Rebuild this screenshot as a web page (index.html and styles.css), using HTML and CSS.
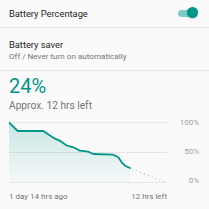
FILE: index.html
```html
<!DOCTYPE html>
<html>
<head>
<meta charset="utf-8">
<link rel="stylesheet" href="styles.css">
</head>
<body>
<div class="row row-toggle">
  <span class="title">Battery Percentage</span>
  <span class="switch"><span class="track"></span><span class="thumb"></span></span>
</div>
<div class="row row-saver">
  <div class="title">Battery saver</div>
  <div class="subtitle">Off / Never turn on automatically</div>
</div>
<div class="battery">
  <div class="level">24%</div>
  <div class="remaining">Approx. 12 hrs left</div>
  <div class="chart">
    <svg class="graph" width="158" height="68" viewBox="0 0 158 68">
      <defs>
        <linearGradient id="fillgrad" x1="0" y1="0" x2="0" y2="1">
          <stop offset="0" stop-color="#009688" stop-opacity="0.2"/>
          <stop offset="1" stop-color="#009688" stop-opacity="0.02"/>
        </linearGradient>
      </defs>
      <line x1="0" y1="4.5" x2="158" y2="4.5" class="grid"/>
      <line x1="0" y1="34.5" x2="158" y2="34.5" class="grid"/>
      <line x1="0" y1="64.5" x2="158" y2="64.5" class="grid"/>
      <path class="area" d="M0 4.5 L8.7 13 L34.3 13 L41 17.5 L46 20.7 L51 22.8 L57.7 27.5 L64.3 29.3 L71 32.7 L79.3 33.7 L84.3 36 L104.3 36.7 L109.3 39.3 L112.7 44.3 L116 47.7 L121 50 L121 64 L0 64 Z"/>
      <path class="line" d="M0 4.5 L8.7 13 L34.3 13 L41 17.5 L46 20.7 L51 22.8 L57.7 27.5 L64.3 29.3 L71 32.7 L79.3 33.7 L84.3 36 L104.3 36.7 L109.3 39.3 L112.7 44.3 L116 47.7 L121 50"/>
      <path class="proj" d="M123 51 L157 64.5"/>
    </svg>
    <div class="axis">
      <span>100%</span>
      <span>50%</span>
      <span>0%</span>
    </div>
  </div>
  <div class="timeline">
    <span>1 day 14 hrs ago</span>
    <span>12 hrs left</span>
  </div>
</div>
</body>
</html>
```

FILE: styles.css
```css
html, body {
  margin: 0;
  padding: 0;
  background: #fafafa;
  font-family: Roboto, "Liberation Sans", sans-serif;
  width: 209px;
  height: 209px;
  overflow: hidden;
}

.row {
  border-bottom: 1px solid #e6e6e6;
  padding-left: 9px;
}

.row-toggle {
  height: 27px;
  display: flex;
  align-items: center;
  justify-content: space-between;
  padding-right: 11px;
}

.title {
  font-size: 9.3px;
  line-height: 12px;
  color: #262626;
}

.switch {
  position: relative;
  width: 20px;
  height: 12px;
  display: flex;
  align-items: center;
  margin-top: -1px;
}

.track {
  width: 19px;
  height: 7px;
  border-radius: 4px;
  background: #80cbc4;
}

.thumb {
  position: absolute;
  right: 0;
  top: 0;
  width: 11px;
  height: 11px;
  border-radius: 50%;
  background: #009688;
  box-shadow: 0 0.5px 1.5px rgba(0,0,0,0.3);
}

.row-saver {
  padding-top: 10.5px;
  padding-bottom: 8px;
  height: 23px;
}

.subtitle {
  font-size: 8.1px;
  line-height: 11px;
  color: #757575;
}

.battery {
  padding-top: 3.5px;
}

.level {
  padding-left: 9px;
  font-size: 20px;
  line-height: 24px;
  color: #009688;
}

.remaining {
  padding-left: 9px;
  margin-top: 2px;
  font-size: 10.2px;
  line-height: 12px;
  color: #757575;
}

.chart {
  margin-top: 6px;
  display: flex;
  padding-left: 9px;
  height: 68px;
}

.graph {
  display: block;
  flex: none;
}

.grid {
  stroke: #e6e6e6;
  stroke-width: 1;
}

.area {
  fill: url(#fillgrad);
}

.line {
  fill: none;
  stroke: #009688;
  stroke-width: 1.8;
  stroke-linejoin: round;
  stroke-linecap: round;
}

.proj {
  fill: none;
  stroke: #c4c4c4;
  stroke-width: 1.2;
  stroke-dasharray: 1.2 3;
}

.axis {
  flex: 1;
  display: flex;
  flex-direction: column;
  justify-content: space-between;
  align-items: flex-end;
  padding-right: 10px;
  font-size: 8px;
  line-height: 10px;
  color: #a0a0a0;
}

.timeline {
  margin-top: 6px;
  width: 158px;
  padding-left: 9px;
  display: flex;
  justify-content: space-between;
  font-size: 8px;
  line-height: 10px;
  color: #757575;
}
```
